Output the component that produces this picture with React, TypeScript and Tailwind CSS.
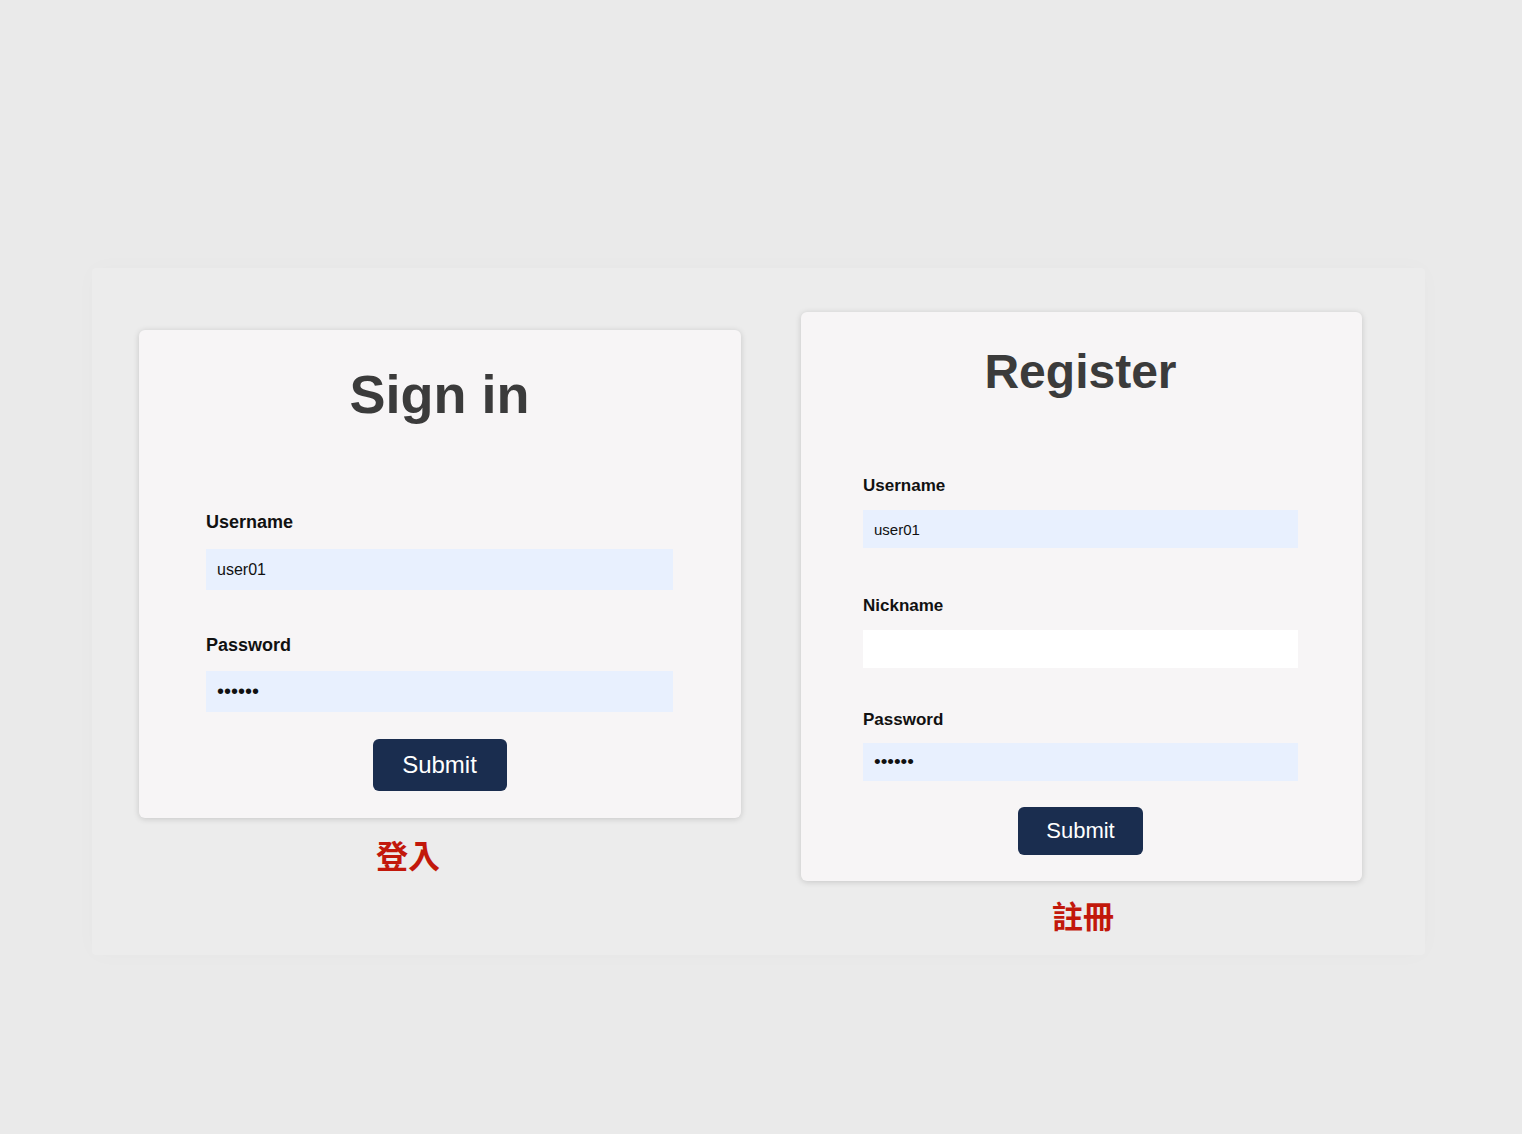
import React from "react";

const font = { fontFamily: '"Liberation Sans", Arial, "Noto Sans CJK TC", sans-serif' };

export default function App() {
  return (
    <div
      className="w-full h-[1134px] bg-[#eaeaea] pt-[268px] pl-[92px]"
      style={font}
    >
      <div className="w-[1333px] h-[687px] bg-[#ececec] rounded-sm shadow-[0_0_24px_rgba(0,0,0,0.02)] flex items-start pl-[47px]">
        {/* Sign in column */}
        <div className="mt-[62px] flex flex-col">
          <div className="w-[602px] h-[488px] bg-[#f7f5f6] rounded-md shadow-[0_1px_6px_rgba(0,0,0,0.16)] pt-[37px] pl-[67px] flex flex-col">
            <h1 className="w-[467px] text-center text-[54px] leading-none font-bold text-[#3b3b3b]">
              Sign in
            </h1>
            <label className="mt-[92px] text-[18px] leading-none font-bold text-[#111]">
              Username
            </label>
            <input
              readOnly
              value="user01"
              className="mt-[18px] w-[467px] h-[41px] bg-[#e8f0fe] pl-[11px] text-[16px] text-[#111] outline-none"
              style={font}
            />
            <label className="mt-[46px] text-[18px] leading-none font-bold text-[#111]">
              Password
            </label>
            <input
              readOnly
              type="password"
              value="123456"
              className="mt-[17px] w-[467px] h-[41px] bg-[#e8f0fe] pl-[11px] text-[20px] text-[#111] outline-none"
              style={font}
            />
            <div className="w-[467px] flex justify-center mt-[27px]">
              <button className="w-[134px] h-[52px] rounded-md bg-[#1a2d4f] text-white text-[24px] leading-none">
                Submit
              </button>
            </div>
          </div>
          <div className="mt-[23px] ml-[237px] text-[32px] leading-none font-bold text-[#c2180b]" style={font}>
            登入
          </div>
        </div>

        {/* Register column */}
        <div className="mt-[44px] ml-[60px] flex flex-col">
          <div className="w-[561px] h-[569px] bg-[#f7f5f6] rounded-md shadow-[0_1px_6px_rgba(0,0,0,0.16)] pt-[36px] pl-[62px] flex flex-col">
            <h1 className="w-[435px] text-center text-[48px] leading-none font-bold text-[#3b3b3b]">
              Register
            </h1>
            <label className="mt-[81px] text-[17px] leading-none font-bold text-[#111]">
              Username
            </label>
            <input
              readOnly
              value="user01"
              className="mt-[16px] w-[435px] h-[38px] bg-[#e8f0fe] pl-[11px] text-[15px] text-[#111] outline-none"
              style={font}
            />
            <label className="mt-[49px] text-[17px] leading-none font-bold text-[#111]">
              Nickname
            </label>
            <input
              readOnly
              value=""
              className="mt-[16px] w-[435px] h-[38px] bg-white pl-[11px] text-[15px] text-[#111] outline-none"
              style={font}
            />
            <label className="mt-[43px] text-[17px] leading-none font-bold text-[#111]">
              Password
            </label>
            <input
              readOnly
              type="password"
              value="123456"
              className="mt-[15px] w-[435px] h-[38px] bg-[#e8f0fe] pl-[11px] text-[19px] text-[#111] outline-none"
              style={font}
            />
            <div className="w-[435px] flex justify-center mt-[26px]">
              <button className="w-[125px] h-[48px] rounded-md bg-[#1a2d4f] text-white text-[22px] leading-none">
                Submit
              </button>
            </div>
          </div>
          <div className="mt-[21px] w-[561px] text-center pl-[3px] text-[31px] leading-none font-bold text-[#c2180b]" style={font}>
            註冊
          </div>
        </div>
      </div>
    </div>
  );
}
